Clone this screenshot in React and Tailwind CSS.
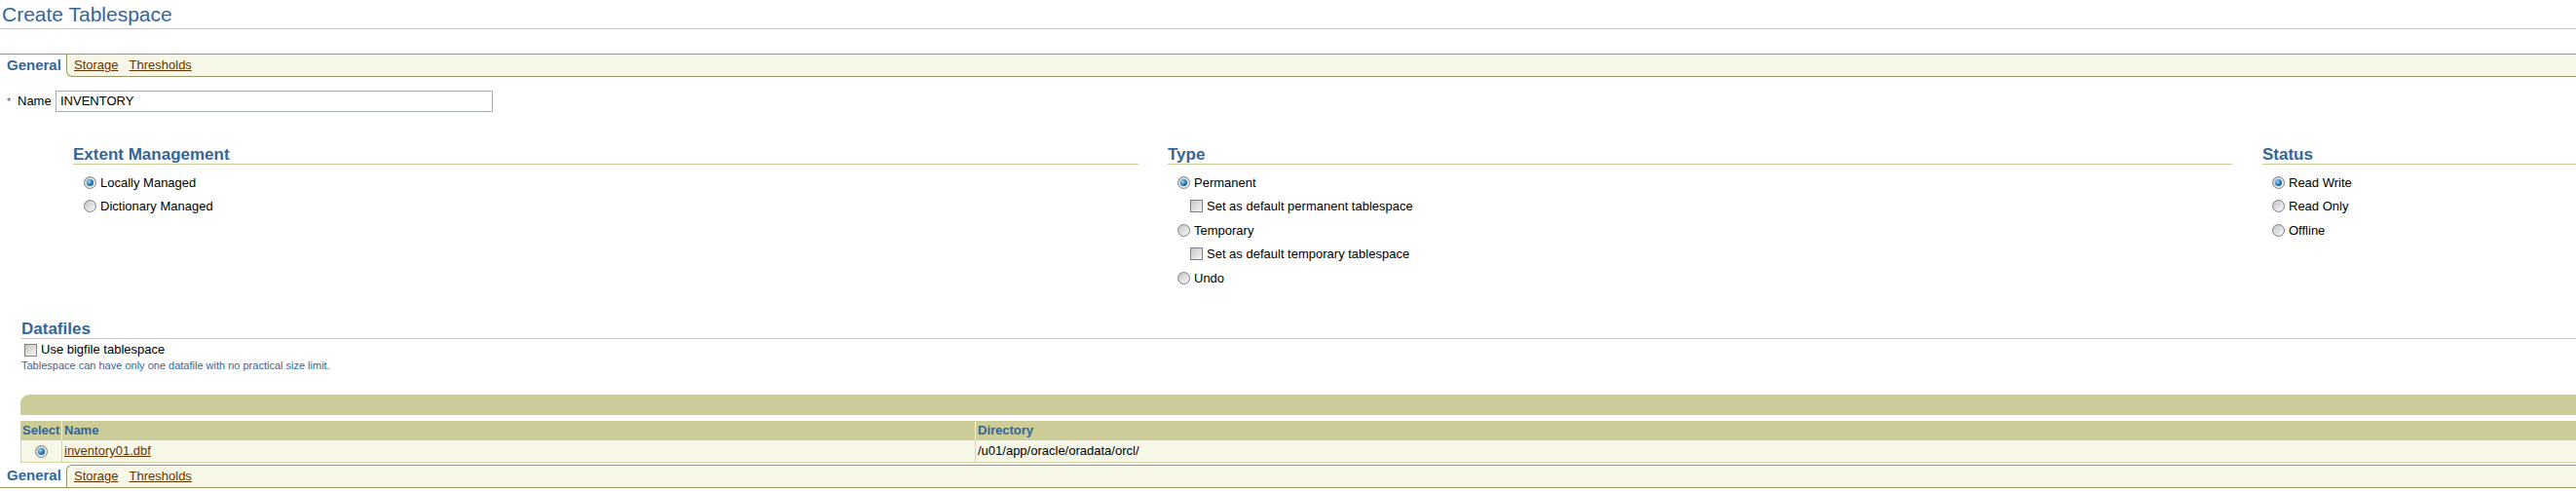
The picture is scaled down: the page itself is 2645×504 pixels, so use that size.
const Radio = ({ checked }) => (
  <span className="inline-flex w-[13px] h-[13px] shrink-0 items-center justify-center rounded-full border border-[#7d8186] bg-[linear-gradient(135deg,#c4c6c8,#f7f7f7)]">
    {checked && (
      <span className="w-[7px] h-[7px] rounded-full bg-[radial-gradient(circle_at_35%_35%,#9ad6f7,#1f74b0_55%,#0b3d66)]" />
    )}
  </span>
);

const Check = () => (
  <span className="inline-block w-[13px] h-[13px] shrink-0 border border-[#808080] bg-[linear-gradient(135deg,#c6c6c2,#f6f6f4)]" />
);

const Option = ({ checked, children, box }) => (
  <div className="flex items-center h-[24.5px] gap-[4px]">
    {box ? <Check /> : <Radio checked={checked} />}
    <span className="text-[13px] leading-none">{children}</span>
  </div>
);

const Heading = ({ children }) => (
  <div className="h-[20px] leading-[19px] border-b border-[#cccc99] text-[17px] font-bold text-[#336699]">
    {children}
  </div>
);

const TabBar = ({ bottom }) => (
  <div
    className={
      bottom
        ? "flex h-[24px] border-b border-[#999966]"
        : "flex h-[24px] border-t border-[#999966]"
    }
  >
    <div className="w-[68px] bg-white pl-[7px] flex items-center text-[15px] font-bold text-[#336699]">
      General
    </div>
    <div
      className={
        bottom
          ? "flex-1 flex items-center gap-[11px] pl-[7px] bg-[#f7f7e7] border-l border-t border-[#999966] rounded-tl-[6px]"
          : "flex-1 flex items-center gap-[11px] pl-[7px] bg-[#f7f7e7] border-l border-b border-[#999966] rounded-bl-[6px]"
      }
    >
      <a className="text-[13px] text-[#663300] underline cursor-pointer">Storage</a>
      <a className="text-[13px] text-[#663300] underline cursor-pointer">Thresholds</a>
    </div>
  </div>
);

export default function App() {
  return (
    <div className="w-[2645px] h-[504px] overflow-hidden bg-white text-black font-['Liberation_Sans',Arial,sans-serif]">
      <div className="h-[30px] border-b border-[#cccc99] pl-[2px] pt-[4px] text-[21px] leading-[22px] text-[#336699]">
        Create Tablespace
      </div>

      <div className="mt-[25px]">
        <TabBar />
      </div>

      <div className="mt-[14px] flex items-center h-[22px]">
        <span className="w-[11px] ml-[7px] text-[11px] text-[#3366cc]">*</span>
        <span className="w-[39px] text-[13px]">Name</span>
        <div className="w-[449px] h-[22px] border border-[#a5acb2] flex items-center pl-[4px] text-[13px]">
          INVENTORY
        </div>
      </div>

      <div className="mt-[34px] h-[179px] flex pl-[75px]">
        <div className="w-[1094px]">
          <Heading>Extent Management</Heading>
          <div className="pt-[6px] pl-[11px]">
            <Option checked>Locally Managed</Option>
            <Option>Dictionary Managed</Option>
          </div>
        </div>
        <div className="w-[1093px] ml-[30px]">
          <Heading>Type</Heading>
          <div className="pt-[6px] pl-[10px]">
            <Option checked>Permanent</Option>
            <div className="pl-[13px]">
              <Option box>Set as default permanent tablespace</Option>
            </div>
            <Option>Temporary</Option>
            <div className="pl-[13px]">
              <Option box>Set as default temporary tablespace</Option>
            </div>
            <Option>Undo</Option>
          </div>
        </div>
        <div className="flex-1 ml-[31px]">
          <Heading>Status</Heading>
          <div className="pt-[6px] pl-[10px]">
            <Option checked>Read Write</Option>
            <Option>Read Only</Option>
            <Option>Offline</Option>
          </div>
        </div>
      </div>

      <div className="pl-[22px]">
        <Heading>Datafiles</Heading>
        <div className="flex items-center h-[22px] pl-[3px] gap-[4px]">
          <Check />
          <span className="text-[13px]">Use bigfile tablespace</span>
        </div>
        <div className="text-[11px] leading-[11px] text-[#336699]">
          Tablespace can have only one datafile with no practical size limit.
        </div>
      </div>

      <div className="ml-[21px] mt-[24px]">
        <div className="h-[21px] bg-[#cccc99] rounded-tl-[9px]" />
        <div className="mt-[6px] h-[20px] flex bg-[#cccc99] text-[13px] font-bold text-[#336699]">
          <div className="w-[42px] pl-[2px] flex items-center">Select</div>
          <div className="w-[938px] pl-[2px] flex items-center border-l border-[#f0f0e0]">Name</div>
          <div className="flex-1 pl-[2px] flex items-center border-l border-[#f0f0e0]">Directory</div>
        </div>
        <div className="h-[23px] flex bg-[#f7f7e7] border-l border-b border-[#d9d5a6] text-[13px]">
          <div className="w-[41px] flex items-center justify-center">
            <Radio checked />
          </div>
          <div className="w-[938px] pl-[2px] flex items-center border-l border-[#d9d5a6]">
            <a className="text-[#663300] underline cursor-pointer">inventory01.dbf</a>
          </div>
          <div className="flex-1 pl-[2px] flex items-center border-l border-[#d9d5a6]">
            /u01/app/oracle/oradata/orcl/
          </div>
        </div>
      </div>

      <div className="mt-[2px]">
        <TabBar bottom />
      </div>
    </div>
  );
}
